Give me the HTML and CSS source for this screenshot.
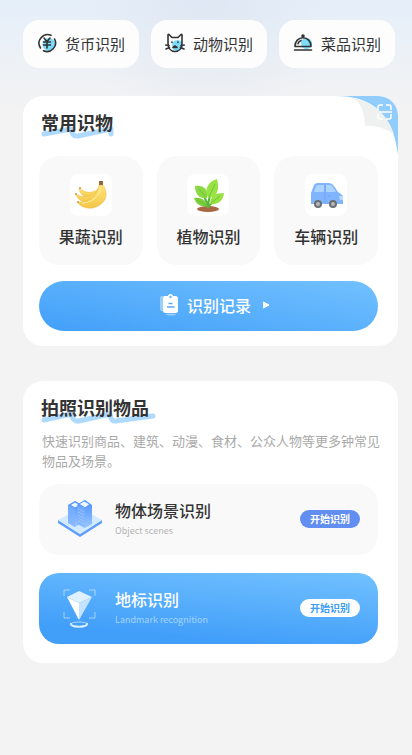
FILE: index.html
```html
<!DOCTYPE html>
<html lang="zh-CN">
<head>
    <meta charset="UTF-8">
    <meta name="viewport" content="width=device-width, initial-scale=1.0">
    <title>识别</title>
    <link rel="stylesheet" href="styles.css">
</head>
<body>

<nav class="quick">
    <button class="quick-item">
        <svg width="20" height="20" viewBox="0 0 20 20" fill="none" stroke="#333" stroke-width="1.6" stroke-linecap="round">
            <circle cx="12" cy="11.500" r="6.500" fill="#7ddcf8" stroke="none"/>
            <path d="M14 2.300A8.600 8.600 0 0 0 3.500 15M6.500 17.800A8.600 8.600 0 0 0 17.600 6"/>
            <path d="M7 5l3 3.500L13 5M10 8.500V15M6.500 9h7M6.500 12h7"/>
        </svg>
        <span>货币识别</span>
    </button>
    <button class="quick-item">
        <svg width="20" height="20" viewBox="0 0 20 20" fill="none" stroke="#333" stroke-width="1.6" stroke-linecap="round" stroke-linejoin="round">
            <circle cx="12.500" cy="12.500" r="5.500" fill="#7ddcf8" stroke="none"/>
            <path d="M3 10V2q0-1 1-.5L7 4.500h6l3-3q1-.5 1 .5v8M3 10c0 5 2.500 8.500 7 8.500s7-3.500 7-8.500"/>
            <path d="M.8 12l3.200.5M1 16l3.500-1.500M19.200 12l-3.200.5M19 16l-3.500-1.500M7 9v.5M13 9v.5M8 14.500l2-1.500 2 1.500z"/>
        </svg>
        <span>动物识别</span>
    </button>
    <button class="quick-item">
        <svg width="20" height="20" viewBox="0 0 20 20" fill="none" stroke="#333" stroke-width="1.6" stroke-linecap="round" stroke-linejoin="round">
            <circle cx="13.500" cy="10.500" r="5.500" fill="#7ddcf8" stroke="none"/>
            <path d="M2 13.500C2 8 5.500 4.800 10 4.800s8 3.200 8 8.700zM1.500 17h17M5 10.800C5.500 9 6.500 8 8 7.400"/>
            <circle cx="10" cy="3" r="1" fill="#333"/>
        </svg>
        <span>菜品识别</span>
    </button>
</nav>

<section class="card">
    <svg class="corner" width="62" height="60" viewBox="0 0 62 60" fill="none">
        <path d="M0 0C30 0 56 12 62 58V0z" fill="#90ccfc"/>
        <path d="M12 1C24 4 28 12 29 30C40 29 50 33 58 38C51 18 37 5 12 1z" fill="#eff1f1"/>
        <path d="M42 14v-3q0-2 2-2h3M50 9h3q2 0 2 2v3M42 18v3q0 2 2 2h3M50 23h3q2 0 2-2v-3M44 16h12" stroke="#fff" stroke-width="1.500"/>
    </svg>
    <h2 class="title">
        <svg class="brush" width="74" height="14" viewBox="0 0 74 14" fill="none">
            <path d="M3 9L30 4q1 8 7 7l33-7v5" stroke="#addafd" stroke-width="5" stroke-linecap="round" stroke-linejoin="round"/>
        </svg>
        <span>常用识物</span>
    </h2>
    <div class="tiles">
        <button class="tile">
            <span class="tile-icon">
                <svg width="36" height="36" viewBox="0 0 36 36">
                    <defs>
                        <linearGradient id="banana" x1="0" y1="0" x2="0" y2="1">
                            <stop offset="0" stop-color="#ffe37a"/>
                            <stop offset="1" stop-color="#f3c748"/>
                        </linearGradient>
                    </defs>
                    <g fill="url(#banana)" stroke="#e9b840" stroke-width=".5">
                        <path d="M7 11c4 5 12 6 18 1l3 4c-7 8-20 6-22-4z"/>
                        <path d="M3 17c7 5 16 3 22-4l4 4c-6 11-22 11-26 1z"/>
                        <path d="M5 25c11 1 19-7 21-17h4c6 9 3 18-7 22-7 3-15 0-18-4z"/>
                    </g>
                    <path d="M9 26c9 0 17-6 19-15" fill="none" stroke="#fff0a0"/>
                    <path d="M26 4h4v4h-4z" fill="#946739"/>
                    <circle cx="7" cy="11" r="1" fill="#c99a40"/>
                    <circle cx="3" cy="17" r="1" fill="#c99a40"/>
                    <circle cx="5" cy="25" r="1" fill="#c99a40"/>
                </svg>
            </span>
            <span>果蔬识别</span>
        </button>
        <button class="tile">
            <span class="tile-icon">
                <svg width="36" height="36" viewBox="0 0 36 36">
                    <ellipse cx="18" cy="32" rx="11" ry="3" fill="#a96843"/>
                    <path d="M18 31C17 25 15 21 13 17M18 31c0-9 2-14 6-20M18 30c-3-4-5-5-9-6M18 30c3-4 6-6 9-7" fill="none" stroke="#5bb53d" stroke-width="2.200"/>
                    <path d="M5 9c9-1 14 4 12 12C9 22 5 17 5 9z" fill="#8bd942"/>
                    <path d="M27 2c3 11 0 18-9 19-4-10 0-16 9-19z" fill="#98e243"/>
                    <path d="M4 21c7-1 12 2 13 8-7 1-11-2-13-8z" fill="#79ce39"/>
                    <path d="M34 16c-1 9-7 12-14 11 0-8 5-11 14-11z" fill="#98e243"/>
                    <path d="M9 12l7 8M25 7l-6 13M8 23l8 5M30 19l-9 7" fill="none" stroke="#62bf3b" stroke-width=".8"/>
                </svg>
            </span>
            <span>植物识别</span>
        </button>
        <button class="tile">
            <span class="tile-icon">
                <svg width="36" height="36" viewBox="0 0 36 36">
                    <path d="M3 27V16l3-8q1-2 4-2h11q3 0 5 3l4 6 3 2q2 1 2 4v6z" fill="#80b4fc"/>
                    <path d="M6 15l2-6q1-1 3-1h5v7zM18 8h4q2 0 3 2l3 5H18z" fill="#add3ff"/>
                    <path d="M17 8v18M20 19h3" fill="none" stroke="#6fa5f0" stroke-width=".8"/>
                    <path d="M31 19h4v4h-3z" fill="#b9dbff"/>
                    <g fill="#b9b9b5" stroke="#6b6e72" stroke-width="2">
                        <circle cx="10" cy="27" r="3"/>
                        <circle cx="25" cy="27" r="3"/>
                    </g>
                </svg>
            </span>
            <span>车辆识别</span>
        </button>
    </div>
    <button class="record">
        <svg width="20" height="22" viewBox="0 0 20 22">
            <rect x="1" y="2" width="12" height="15" rx="2" fill="#fff" opacity=".4"/>
            <ellipse cx="12" cy="20.500" rx="5" ry="1" fill="#fff" opacity=".4"/>
            <rect x="4" y="2" width="15" height="17" rx="2.500" fill="#fff"/>
            <circle cx="11.500" cy="2.500" r="2.500" fill="#fff"/>
            <circle cx="11.500" cy="3" r="1.200" fill="#65b5fd"/>
            <path d="M9.500 9.500h4M8 13h7.500" stroke="#55aafb" stroke-width="1.700"/>
        </svg>
        <span>识别记录</span>
        <svg class="arrow" width="8" height="8" viewBox="0 0 8 8">
            <path d="M1.500 1L7 4L1.500 7z" fill="#fff" stroke="#fff" stroke-linejoin="round"/>
        </svg>
    </button>
</section>

<section class="card card-photo">
    <h2 class="title">
        <svg class="brush" width="116" height="14" viewBox="0 0 116 14" fill="none">
            <path d="M3 10L30 4q2 8 8 7l31-7q1 8 6 7l37-5" stroke="#addafd" stroke-width="5" stroke-linecap="round" stroke-linejoin="round"/>
        </svg>
        <span>拍照识别物品</span>
    </h2>
    <p class="desc">快速识别商品、建筑、动漫、食材、公众人物等更多钟常见物品及场景。</p>
    <article class="scene">
        <svg width="46" height="40" viewBox="0 0 46 40">
            <defs>
                <linearGradient id="tower" x1="0" y1="0" x2="0" y2="1">
                    <stop offset="0" stop-color="#4b8efe"/>
                    <stop offset="1" stop-color="#9bc9ff"/>
                </linearGradient>
            </defs>
            <path d="M1 21l22 14 22-14v3L23 38 1 24z" fill="#5d9dfd"/>
            <path d="M1 21L23 9l22 12-22 14z" fill="#d3e9ff"/>
            <path d="M11 6l7-4 7 4v18l-7 4-7-4z" fill="url(#tower)"/>
            <path d="M11 6l7 4v18l-7-4z" fill="#80b3ff" opacity=".6"/>
            <path d="M13 6l5-3 5 3-5 3z" fill="#edf6ff" stroke="#559afe"/>
            <path d="M20 6l8-5 7 5v19l-7 4-8-4z" fill="url(#tower)"/>
            <path d="M20 6l8 4v19l-8-4z" fill="#80b3ff" opacity=".5"/>
            <path d="M22 5l5-3 6 3-5 4z" fill="#edf6ff" stroke="#559afe"/>
            <path d="M22 10v13M24 11v13M26 12v13" stroke="#d0e7ff" stroke-dasharray="1 2" stroke-width=".5"/>
        </svg>
        <div class="scene-text">
            <h3>物体场景识别</h3>
            <p>Object scenes</p>
        </div>
        <button class="start">开始识别</button>
    </article>
    <article class="scene scene-blue">
        <svg width="46" height="40" viewBox="0 0 46 40" fill="none">
            <path d="M7 8V2h6M32 2h6v6M7 24v6h6M32 30h6v-6" stroke="#fff" opacity=".5"/>
            <path d="M10 9l12 6v17z" fill="#fff"/>
            <path d="M35 9l-13 6v17z" fill="#c3e3ff"/>
            <path d="M10 9l12-6 13 6-13 6z" fill="#dff0ff"/>
            <path d="M14 35c-1 2 2 4 8 4s9-2 8-4" stroke="#e9f6ff" stroke-width="1.500"/>
            <ellipse cx="22" cy="36" rx="8" ry="2" stroke="#d4ecff" stroke-width=".7"/>
        </svg>
        <div class="scene-text">
            <h3>地标识别</h3>
            <p>Landmark recognition</p>
        </div>
        <button class="start">开始识别</button>
    </article>
</section>

</body>
</html>
```
FILE: styles.css
```css
* {
    box-sizing: border-box;
}

body {
    margin: 0;
    min-height: 100vh;
    padding: 20px 14px 20px 23px;
    font-family: "Noto Sans CJK SC", sans-serif;
    color: #333;
    background: radial-gradient(circle at 50% 0, rgba(218, 226, 238, 0.6), rgba(218, 226, 238, 0) 130px) no-repeat,
        linear-gradient(#e5effa, #f3f3f3 110px) no-repeat #f3f3f3;
}

h2, h3, p {
    margin: 0;
}

button {
    padding: 0;
    border: none;
    font-family: inherit;
    color: inherit;
    cursor: pointer;
}

.quick {
    display: grid;
    grid-template-columns: repeat(3, 1fr);
    gap: 12px;
    margin-right: 3px;
    margin-bottom: 28px;
}

.quick-item {
    display: flex;
    align-items: center;
    justify-content: center;
    gap: 8px;
    height: 48px;
    padding-bottom: 2px;
    border-radius: 16px;
    background-color: #fdfdfe;
    font-size: 15px;
}

.card {
    position: relative;
    overflow: hidden;
    padding: 14px 20px 15px 16px;
    margin-bottom: 35px;
    border-radius: 20px;
    background-color: #fff;
}

/* folded corner with the scan mark */
.corner {
    position: absolute;
    top: 0;
    right: 0;
}

.title {
    position: relative;
    padding-left: 2px;
    font-size: 18px;
    line-height: 24px;
}

.title span {
    position: relative;
}

.brush {
    position: absolute;
    left: 2px;
    bottom: -5px;
}

.tiles {
    display: grid;
    grid-template-columns: repeat(3, 1fr);
    gap: 14px;
    margin-top: 22px;
}

.tile {
    display: flex;
    flex-direction: column;
    align-items: center;
    gap: 8px;
    padding: 18px 0 16px;
    border-radius: 20px;
    background-color: #f9f9f9;
    font-size: 16px;
    font-weight: 500;
    line-height: 25px;
}

.tile-icon {
    display: flex;
    align-items: center;
    justify-content: center;
    width: 42px;
    height: 42px;
    border-radius: 8px;
    background-color: #fff;
}

.record {
    display: flex;
    align-items: center;
    justify-content: center;
    gap: 8px;
    width: 100%;
    height: 50px;
    padding: 0 0 2px 12px;
    margin-top: 16px;
    border-radius: 25px;
    background: linear-gradient(190deg, #72c1ff, #429ff9);
    color: #fff;
    font-size: 16px;
    font-weight: 500;
}

.arrow {
    margin-left: 3px;
}

.card-photo {
    padding-bottom: 19px;
}

.desc {
    margin: 12px -2px 13px 3px;
    font-size: 13px;
    line-height: 20px;
    color: #aaa;
}

.scene {
    display: flex;
    align-items: center;
    gap: 12px;
    min-height: 71px;
    padding: 0 18px 2px;
    border-radius: 20px;
    background-color: #f9f9f9;
}

.scene-text {
    flex: 1;
}

.scene-text h3 {
    font-size: 16px;
    font-weight: 500;
    line-height: 24px;
}

.scene-text p {
    font-size: 9px;
    line-height: 18px;
    color: #b3b3b3;
}

.start {
    width: 60px;
    height: 18px;
    border-radius: 9px;
    background-color: #628df1;
    color: #fff;
    font-size: 10px;
    font-weight: bold;
    line-height: 18px;
}

.scene-blue {
    margin-top: 18px;
    background: linear-gradient(185deg, #72c1ff, #429ff9 80%);
    color: #fff;
}

.scene-blue .scene-text p {
    color: #a5d4ff;
}

.scene-blue .start {
    background-color: #fff;
    color: #3d9df2;
}
```
